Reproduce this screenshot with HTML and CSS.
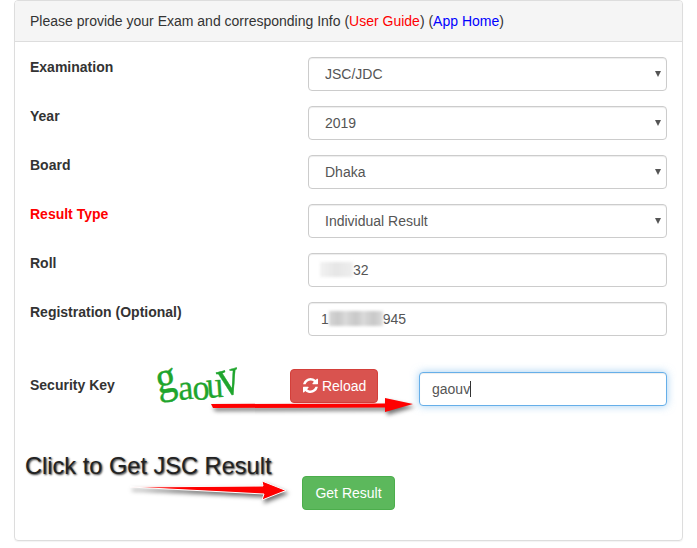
FILE: index.html
```html
<!DOCTYPE html>
<html lang="en">
<head>
    <meta charset="UTF-8">
    <meta name="viewport" content="width=device-width, initial-scale=1.0">
    <title>Exam Result</title>
    <link rel="stylesheet" href="styles.css">
</head>
<body>
    <div class="panel">
        <div class="panel-heading">
            Please provide your Exam and corresponding Info
            (<a class="link-red" href="#">User Guide</a>)
            (<a class="link-blue" href="#">App Home</a>)
        </div>
        <form class="panel-body">
            <div class="form-row">
                <label>Examination</label>
                <div class="select-wrap">
                    <select><option>JSC/JDC</option></select>
                </div>
            </div>
            <div class="form-row">
                <label>Year</label>
                <div class="select-wrap">
                    <select><option>2019</option></select>
                </div>
            </div>
            <div class="form-row">
                <label>Board</label>
                <div class="select-wrap">
                    <select><option>Dhaka</option></select>
                </div>
            </div>
            <div class="form-row">
                <label class="label-red">Result Type</label>
                <div class="select-wrap">
                    <select><option>Individual Result</option></select>
                </div>
            </div>
            <div class="form-row">
                <label>Roll</label>
                <div class="form-control"><span class="blur blur-roll"></span>32</div>
            </div>
            <div class="form-row">
                <label>Registration (Optional)</label>
                <div class="form-control">1<span class="blur blur-reg"></span>945</div>
            </div>

            <div class="security-row">
                <label class="security-label">Security Key</label>
                <svg class="captcha" width="88" height="38" viewBox="0 0 88 38">
                    <text transform="translate(1 22) rotate(-10) scale(1.2 1.35)">g</text>
                    <text transform="translate(22 28) rotate(-5) scale(1 1.05)">a</text>
                    <text transform="translate(36 28) rotate(-3) scale(1 1.05)">o</text>
                    <text transform="translate(50 26) rotate(-4) scale(1 1.1)">u</text>
                    <text transform="translate(65 25) rotate(-14) scale(1.25 1.6)">v</text>
                </svg>
                <button type="button" class="btn btn-danger">
                    <svg class="icon" width="15" height="15" viewBox="128 128 1536 1536"><path d="M1639 1056q0 5-1 7-64 268-268 434.5t-478 166.5q-146 0-282.5-55t-243.5-157l-129 129q-19 19-45 19t-45-19-19-45v-448q0-26 19-45t45-19h448q26 0 45 19t19 45-19 45l-137 137q71 66 161 102t187 36q134 0 250-65t186-179q11-17 53-117 8-23 30-23h192q13 0 22.5 9.5t9.5 22.5zm25-800v448q0 26-19 45t-45 19h-448q-26 0-45-19t-19-45 19-45l138-138q-148-137-349-137-134 0-250 65t-186 179q-11 17-53 117-8 23-30 23h-199q-13 0-22.5-9.5t-9.5-22.5v-7q65-268 270-434.5t480-166.5q146 0 284 55.5t245 156.5l130-129q19-19 45-19t45 19 19 45z"/></svg>
                    Reload
                </button>
                <div class="form-control focused">gaouv<span class="caret"></span></div>
            </div>

            <div class="submit-row">
                <button type="button" class="btn btn-success">Get Result</button>
            </div>
        </form>
    </div>

    <!-- arrows and caption pasted over the screenshot -->
    <div class="note">Click to Get JSC Result</div>
    <svg class="arrows" width="697" height="548" viewBox="0 0 697 548">
        <polygon points="211,404 385,403.5 385,398 413,404 385,412 385,407.5 213,408"/>
        <polygon class="arrow-outlined" points="130,487 263,486 262,481 286,490.5 262,500 264,494"/>
    </svg>
</body>
</html>
```
FILE: styles.css
```css
* {
    margin: 0;
    padding: 0;
    box-sizing: border-box;
}

body {
    font-family: "Liberation Sans", Arial, sans-serif;
    font-size: 14px;
    line-height: 20px;
    color: #333;
    background: #fff;
    position: relative;
    width: 697px;
    height: 548px;
    overflow: hidden;
}

.panel {
    width: 669px;
    margin-left: 14px;
    border: 1px solid #ddd;
    border-radius: 4px;
    box-shadow: 0 1px 1px rgba(0, 0, 0, 0.05);
}

.panel-heading {
    background: #f5f5f5;
    border-bottom: 1px solid #ddd;
    border-radius: 3px 3px 0 0;
    height: 41px;
    padding: 10px 15px;
}

.link-red {
    color: #f00;
    text-decoration: none;
}

.link-blue {
    color: #00f;
    text-decoration: none;
}

.panel-body {
    padding: 15px 15px 30px;
}

.form-row {
    display: grid;
    grid-template-columns: 278px 359px;
    margin-bottom: 15px;
}

.form-row:last-of-type {
    margin-bottom: 0;
}

label {
    font-weight: bold;
}

.label-red {
    color: #f00;
}

.form-control,
select {
    display: block;
    width: 100%;
    height: 34px;
    padding: 6px 12px;
    font: inherit;
    color: #555;
    background: #fff;
    border: 1px solid #ccc;
    border-radius: 4px;
    box-shadow: inset 0 1px 1px rgba(0, 0, 0, 0.075);
}

select {
    appearance: none;
    padding-left: 16px;
}

.select-wrap {
    position: relative;
}

.select-wrap::after {
    content: "";
    position: absolute;
    right: 6px;
    top: 14px;
    border-left: 3.5px solid transparent;
    border-right: 3.5px solid transparent;
    border-top: 6px solid #555;
}

.blur {
    display: inline-block;
    height: 15px;
    vertical-align: -2px;
    filter: blur(1.5px);
}

.blur-roll {
    width: 33px;
    margin-left: -1px;
    background: linear-gradient(90deg, #f2f2f2 0%, #e6e6e6 50%, #eee 100%);
}

.blur-reg {
    width: 54px;
    background: repeating-linear-gradient(90deg, #d6d6d6 0, #c8c8c8 9px, #ddd 18px);
}

.security-row {
    display: flex;
    align-items: flex-start;
    margin-top: 33px;
}

.security-label {
    width: 127px;
    margin-top: 6px;
}

.captcha {
    width: 88px;
    margin: 3px 45px 0 0;
    overflow: visible;
}

.captcha text {
    font-family: "Liberation Serif", serif;
    font-size: 34px;
    fill: #1fa52d;
    stroke: #1fa52d;
    stroke-width: 0.3;
}

.btn {
    height: 34px;
    padding: 6px 12px;
    font: inherit;
    color: #fff;
    white-space: nowrap;
    border: 1px solid transparent;
    border-radius: 4px;
}

.btn-danger {
    width: 88px;
    margin-right: 41px;
    background: #d9534f;
    border-color: #d43f3a;
}

.btn-success {
    width: 93px;
    background: #5cb85c;
    border-color: #4cae4c;
}

.icon {
    fill: #fff;
    vertical-align: -2px;
}

.focused {
    flex: 1;
    width: auto;
    margin-top: 3px;
    border-color: #66afe9;
    box-shadow: inset 0 1px 1px rgba(0, 0, 0, 0.075), 0 0 8px rgba(102, 175, 233, 0.6);
}

.caret {
    display: inline-block;
    width: 1px;
    height: 16px;
    vertical-align: -3px;
    background: #333;
}

.submit-row {
    margin: 66px 0 0 272px;
}

.note {
    position: absolute;
    left: 25px;
    top: 452px;
    font-size: 23.6px;
    line-height: 28px;
    color: #222;
    text-shadow: 1px 1px 2px rgba(0, 0, 0, 0.8);
}

.arrows {
    position: absolute;
    left: 0;
    top: 0;
    fill: #f00;
    filter: drop-shadow(2px 3px 2px rgba(0, 0, 0, 0.55));
    pointer-events: none;
}

.arrow-outlined {
    stroke: #fff;
    stroke-width: 1;
}
```
